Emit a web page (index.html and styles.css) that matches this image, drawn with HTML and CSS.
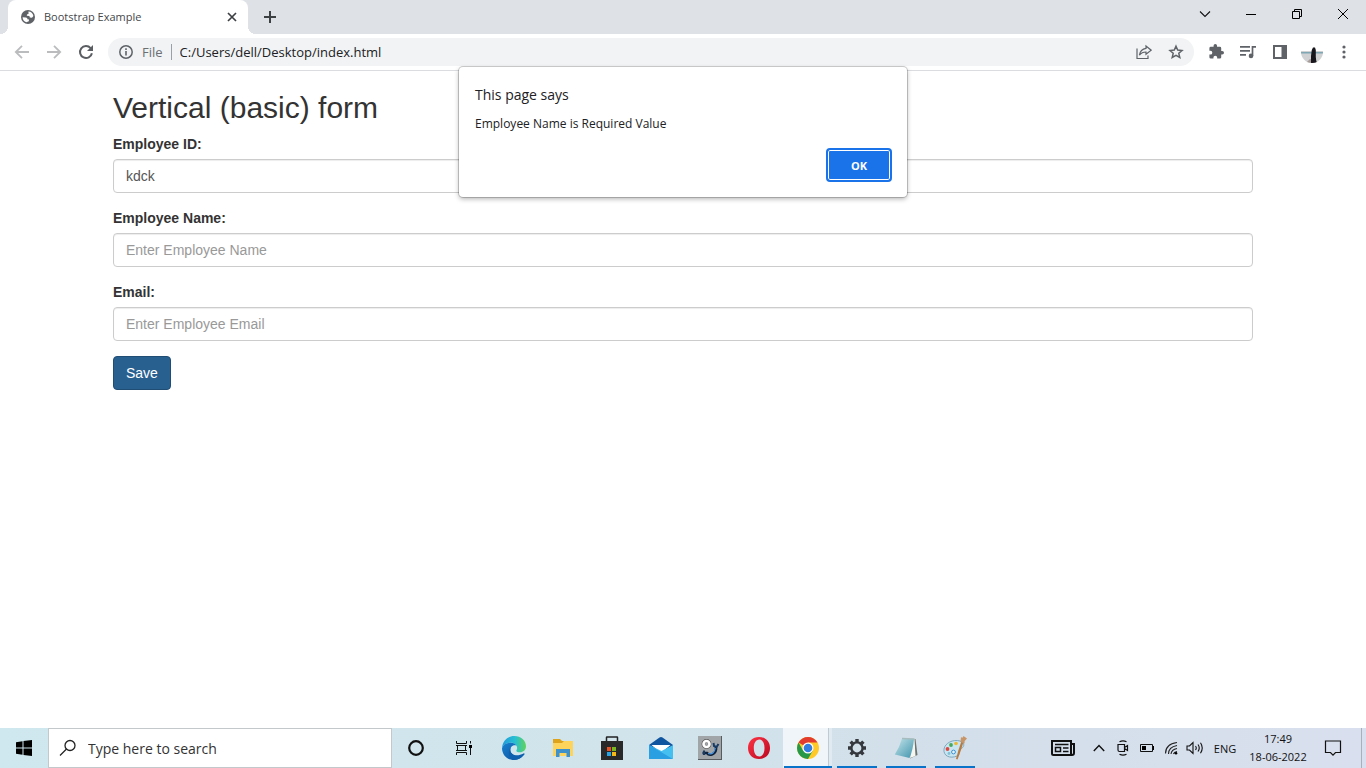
FILE: index.html
```html
<!DOCTYPE html>
<html lang="en">
<head>
<meta charset="utf-8">
<title>Bootstrap Example</title>
<link rel="stylesheet" href="styles.css">
</head>
<body>
<div class="desktop">
  <header class="tabstrip">
    <div class="tab">
      <svg class="icon" width="16" height="16" viewBox="0 0 16 16"><circle cx="8" cy="8" r="7" fill="#5f6368"/><path d="M2.6 8.2 5.8 8.4C7 8.6 7.6 9.2 7.4 10.2L9 10.4 8.8 12.2 6.4 13.3C4 12.6 2.7 10.6 2.6 8.2zM8.4 2.6C11 2.6 13 4.6 13.4 7L12 8.8 9.8 8.4 9.4 7 6.8 6.8 7 5.4 8.6 4.8z" fill="#fff"/></svg>
      <span class="tab-title">Bootstrap Example</span>
      <button class="tab-close" aria-label="Close tab"><svg width="10" height="10" viewBox="0 0 10 10"><path d="M1 1 9 9M9 1 1 9" stroke="#3c4043" stroke-width="1.7"/></svg></button>
    </div>
    <button class="new-tab" aria-label="New tab"><svg width="12" height="12" viewBox="0 0 12 12"><path d="M6 0V12M0 6H12" stroke="#3c4043" stroke-width="2"/></svg></button>
    <div class="window-buttons">
      <button class="window-button" aria-label="Search tabs"><svg width="12" height="12" viewBox="0 0 12 12"><path d="M1 3.500 6 8.500 11 3.500" fill="none" stroke="#111" stroke-width="1.100"/></svg></button>
      <button class="window-button" aria-label="Minimize"><svg width="10" height="10" viewBox="0 0 10 10"><path d="M0 5.500H10" stroke="#000"/></svg></button>
      <button class="window-button" aria-label="Restore"><svg width="10" height="10" viewBox="0 0 10 10"><path d="M.5 2.500H7.500V9.500H.5zM2.500 2.500V.5H9.500V7.500H7.500" fill="none" stroke="#000"/></svg></button>
      <button class="window-button" aria-label="Close"><svg width="10" height="10" viewBox="0 0 10 10"><path d="M0 0 10 10M10 0 0 10" stroke="#000"/></svg></button>
    </div>
  </header>

  <nav class="toolbar">
    <button class="tool" aria-label="Back"><svg width="16" height="16" viewBox="0 0 16 16"><path d="M15 8H2M8 1.800 1.800 8 8 14.200" fill="none" stroke="#babcbe" stroke-width="1.800"/></svg></button>
    <button class="tool" aria-label="Forward"><svg width="16" height="16" viewBox="0 0 16 16"><path d="M1 8H14M8 1.800 14.200 8 8 14.200" fill="none" stroke="#babcbe" stroke-width="1.800"/></svg></button>
    <button class="tool" aria-label="Reload"><svg width="16" height="16" viewBox="0 0 16 16"><path d="M13.900 9.200A6 6 0 1 1 12.600 4.100" fill="none" stroke="#5a5d61" stroke-width="2"/><path d="M15 1V7H9z" fill="#5a5d61"/></svg></button>
    <div class="omnibox">
      <svg class="icon" width="16" height="16" viewBox="0 0 16 16"><circle cx="8" cy="8" r="6.200" fill="none" stroke="#5f6368" stroke-width="1.500"/><path d="M8 7V11.500M8 4.300V6" stroke="#5f6368" stroke-width="1.600"/></svg>
      <label class="scheme" for="url">File</label>
      <input class="url" id="url" type="text" value="C:/Users/dell/Desktop/index.html">
      <button class="tool" aria-label="Share"><svg width="16" height="16" viewBox="0 0 16 16"><path d="M1 4.500V14.500H12V11.500M10 2 15.200 6.200 10 10.300V8C7 8 5 9 3.400 11.200 4 7.400 6.400 4.900 10 4.400z" fill="none" stroke="#5f6368" stroke-width="1.200"/></svg></button>
      <button class="tool" aria-label="Bookmark"><svg width="16" height="16" viewBox="0 0 16 16"><path d="M8 2.200 9.700 6.100 14 6.500 10.800 9.300 11.800 13.500 8 11.300 4.200 13.500 5.200 9.300 2 6.500 6.300 6.100z" fill="none" stroke="#5f6368" stroke-width="1.500"/></svg></button>
    </div>
    <button class="tool" aria-label="Extensions"><svg width="16" height="16" viewBox="1 1 23 23"><path d="M21.500 11H20V7a2 2 0 0 0-2-2h-4V3.500a2.500 2.500 0 0 0-5 0V5H5a2 2 0 0 0-2 2v3.800h1.500a2.700 2.700 0 0 1 0 5.400H3V20a2 2 0 0 0 2 2h3.800v-1.500a2.700 2.700 0 0 1 5.400 0V22H18a2 2 0 0 0 2-2v-4h1.500a2.500 2.500 0 0 0 0-5z" fill="#5f6368"/></svg></button>
    <button class="tool" aria-label="Media"><svg width="16" height="16" viewBox="0 0 16 16"><path d="M0 2.900H10M0 6.900H10M0 10.900H6M12.500 12V2.900H16" fill="none" stroke="#5f6368" stroke-width="1.700"/><circle cx="11" cy="11.900" r="2.300" fill="#5f6368"/></svg></button>
    <button class="tool" aria-label="Side panel"><svg width="16" height="16" viewBox="0 0 16 16"><path d="M1 1H15V15H1zM3 3V13H9.500V3z" fill="#5f6368" fill-rule="evenodd"/></svg></button>
    <button class="tool" aria-label="Profile"><svg width="22" height="22" viewBox="0 0 22 22"><clipPath id="face"><circle cx="11" cy="11" r="11"/></clipPath><g clip-path="url(#face)"><path d="M0 0H22V10H0z" fill="#fff"/><path d="M0 10H22V22H0z" fill="#cfd1d2"/><path d="M0 11H22V12.500H0z" fill="#7fa6b3"/><path d="M5 22 9 18 16 20V22z" fill="#a69c98"/><path d="M10.800 9 12 6.500 14 6.500 14.800 9 14.800 16 15.500 22H10V15z" fill="#17161c"/></g></svg></button>
    <button class="tool" aria-label="Menu"><svg width="16" height="16" viewBox="0 0 16 16" fill="#5f6368"><circle cx="8" cy="3" r="1.600"/><circle cx="8" cy="8" r="1.600"/><circle cx="8" cy="13" r="1.600"/></svg></button>
  </nav>

  <main class="page">
    <form class="container">
      <h2 class="heading">Vertical (basic) form</h2>
      <div class="form-group">
        <label for="empid">Employee ID:</label>
        <input class="form-control" id="empid" type="text" value="kdck">
      </div>
      <div class="form-group">
        <label for="empname">Employee Name:</label>
        <input class="form-control" id="empname" type="text" placeholder="Enter Employee Name">
      </div>
      <div class="form-group">
        <label for="email">Email:</label>
        <input class="form-control" id="email" type="email" placeholder="Enter Employee Email">
      </div>
      <button class="save" type="button">Save</button>
    </form>
  </main>

  <section class="alert" role="alertdialog" aria-labelledby="alert-title" aria-describedby="alert-text">
    <h1 class="alert-title" id="alert-title">This page says</h1>
    <p class="alert-text" id="alert-text">Employee Name is Required Value</p>
    <button class="alert-ok">OK</button>
  </section>

  <footer class="taskbar">
    <button class="start" aria-label="Start"><svg width="16" height="16" viewBox="0 0 16 16"><path d="M0 2.200 6.500 1.300V7.500H0zM7.500 1.100 16 0V7.500H7.500zM0 8.500H6.500V14.700L0 13.800zM7.500 8.500H16V16L7.500 14.900z"/></svg></button>
    <div class="search">
      <svg class="icon" width="18" height="18" viewBox="0 0 18 18"><circle cx="11" cy="6.500" r="5" fill="none" stroke="#222" stroke-width="1.300"/><path d="M7.500 10 1 16.500" stroke="#222" stroke-width="1.300"/></svg>
      <input class="search-input" type="text" aria-label="Search" placeholder="Type here to search">
    </div>
    <button class="app shell" aria-label="Cortana"><svg width="18" height="18" viewBox="0 0 18 18"><circle cx="9" cy="9" r="6.800" fill="none" stroke="#111" stroke-width="2.200"/></svg></button>
    <button class="app shell" aria-label="Task view"><svg width="18" height="16" viewBox="0 0 18 16"><path d="M1.500 1V3.500H11.500V1M1.500 15V12.500H11.500V15M2.500 5.500H10.500V10.500H2.500zM1 5.500H12M1 10.500H12M15.500 1V3.500M15.500 8V15" fill="none" stroke="#111"/><path d="M14 5H17V8H14z"/></svg></button>
    <button class="app" aria-label="Edge"><svg width="24" height="24" viewBox="0 0 24 24"><defs><linearGradient id="edge-top" x2="1"><stop stop-color="#219bdc"/><stop offset=".55" stop-color="#28bfd2"/><stop offset="1" stop-color="#5fd45a"/></linearGradient><linearGradient id="edge-low" x2="1" y2="1"><stop stop-color="#1681cf"/><stop offset="1" stop-color="#0d4f9e"/></linearGradient></defs><path d="M0 12C.8 4.500 6 0 12.300 0 19 0 24 4.800 24 10.300 24 14 21.300 16.300 18 16.300 15.500 16.300 13.800 15.300 14.600 14 16.300 11 13.800 6.700 8.800 6.700 4.500 6.700 1.300 9 0 12z" fill="url(#edge-top)"/><path d="M0 12C1.200 8.800 4.500 6.700 8.800 6.700 11.500 6.700 13.500 8 14.500 9.500 11 8.500 8.200 11 8.300 14 8.500 18.500 13.500 21.500 20.500 19.500 18.500 22.500 15 24 12 24 5 24 0 18.800 0 12z" fill="url(#edge-low)"/><path d="M8.300 14C8.500 19 15 21 21.500 17.500 22.500 17 23 18 22 19 19 23 14.500 24 12 23.700 6 22.500 5.500 14.500 9.300 10.800 8.600 11.500 8.300 12.700 8.300 14z" fill="#0e5fae"/></svg></button>
    <button class="app" aria-label="File Explorer"><svg width="22" height="20" viewBox="0 0 22 20"><path d="M1 1H8L10 3H21V6H1z" fill="#dfa21b"/><path d="M1 5H10L12 3H21V18H1z" fill="#ffd45c"/><path d="M4 19V11H18V19H14.500V15H7.500V19z" fill="#3f91cb"/></svg></button>
    <button class="app" aria-label="Store"><svg width="24" height="24" viewBox="0 0 24 24"><path d="M6.500 6V1.500Q6.500 1 7 1H17Q17.500 1 17.500 1.500V6" fill="none" stroke="#222" stroke-width="1.500"/><path d="M1 5H23V24H1z" fill="#292929"/><path d="M7 11H11V15H7z" fill="#e95224"/><path d="M12 11H16V15H12z" fill="#78b720"/><path d="M7 16H11V20H7z" fill="#24a6e8"/><path d="M12 16H16V20H12z" fill="#f5b817"/></svg></button>
    <button class="app" aria-label="Mail"><svg width="24" height="24" viewBox="0 0 24 24"><path d="M0 9 10.500 1.500Q12 .6 13.500 1.500L24 9V15H0z" fill="#0f559f"/><path d="M2.500 9H21.500L12 17z" fill="#fff"/><path d="M0 9 12.500 15 24 9V23H0z" fill="#45bff0"/><path d="M0 9 23 22.500V23H0z" fill="#2a9fe2"/></svg></button>
    <button class="app" aria-label="Diagnostics"><svg width="24" height="24" viewBox="0 0 24 24"><path d="M0 0H24V24H0z" fill="#585c60"/><path d="M0 0H23V23H0z" fill="#a2a5a7"/><circle cx="8.500" cy="8" r="3.200" fill="none" stroke="#555" stroke-width="3.400"/><circle cx="8.500" cy="8" r="3" fill="none" stroke="#fff" stroke-width="2.600"/><path d="M4.500 17H9C11 20 17 19 18 13.500L18 11" fill="none" stroke="#10243d" stroke-width="2.600"/><path d="M10 17.500C14 18.500 16.500 17 17.300 12" fill="none" stroke="#4e9be5" stroke-width="1.200"/><path d="M6 14.500V19M15.500 7 16 10 18.500 11 20.500 8" fill="none" stroke="#153b66" stroke-width="2"/></svg></button>
    <button class="app" aria-label="Opera"><svg width="24" height="24" viewBox="0 0 24 24"><defs><linearGradient id="opera" y2="1"><stop stop-color="#ff3445"/><stop offset="1" stop-color="#b90820"/></linearGradient></defs><path d="M12 1C18.500 1 23 5.500 23 12S18.500 23 12 23 1 18.500 1 12 5.500 1 12 1zM12.300 3.500C9 3.500 6.800 7 6.800 12S9 20.500 12.300 20.500 17.500 17 17.500 12 15.500 3.500 12.300 3.500z" fill="url(#opera)" fill-rule="evenodd"/></svg></button>
    <button class="app open active" aria-label="Chrome"><svg width="24" height="24" viewBox="0 0 24 24"><circle cx="12" cy="12" r="11" fill="#ffca28"/><path d="M12 12 2.500 6.500A11 11 0 0 1 21.500 6.500H12z" fill="#e33b2e"/><path d="M2.500 6.500A11 11 0 0 0 12 23L16.800 14.800 7.200 14.700z" fill="#279847"/><circle cx="12" cy="12" r="5.500" fill="#fff"/><circle cx="12" cy="12" r="4.300" fill="#347de0"/></svg></button>
    <button class="app open" aria-label="Settings"><svg width="20" height="20" viewBox="0 0 20 20"><circle cx="10" cy="10" r="5.600" fill="none" stroke="#35383d" stroke-width="2.400"/><path d="M10 1V4.500M10 15.500V19M1 10H4.500M15.500 10H19M3.600 3.600 6 6M14 14 16.400 16.400M16.400 3.600 14 6M6 14 3.600 16.400" stroke="#35383d" stroke-width="3.400"/></svg></button>
    <button class="app open" aria-label="Notepad"><svg width="24" height="24" viewBox="0 0 24 24"><defs><linearGradient id="note" x2="1" y2="1"><stop stop-color="#c5e6ea"/><stop offset="1" stop-color="#3f93ad"/></linearGradient></defs><path d="M19 3 21.500 3 23.500 19 16 22.500z" fill="#6c7472"/><path d="M19 3 20.500 3 21.500 20 16 22z" fill="#f5f6ef"/><path d="M8 2.500 20 3Q19 14 15.500 22L.8 18.500Q5.500 11.500 8 2.500z" fill="url(#note)"/><path d="M8 2.500 20.500 3" stroke="#a6bcbe" stroke-width="1.500"/></svg></button>
    <button class="app open" aria-label="Paint"><svg width="24" height="24" viewBox="0 0 24 24"><path d="M1 13C2 7 10 3 17 5 23 7 21 12 17 13 15 15 18 18 14 20 7 23 0 20 1 13z" fill="#c8e5f1" stroke="#7fa9bf"/><circle cx="4.500" cy="13" r="1.900" fill="#dc4840"/><circle cx="8" cy="9" r="1.900" fill="#48a95b"/><circle cx="13" cy="7.500" r="1.800" fill="#eeb732"/><circle cx="6" cy="17.500" r="1.400" fill="#7fc2d5"/><circle cx="10.500" cy="16" r="1.900" fill="#e5f2f7" stroke="#3b8fd2"/><path d="M20.500 6 18 14 14.500 23.500 13 23 15.500 14 18.500 5z" fill="#b97a40"/><path d="M17.500 6 18 1Q19.500 3 20.500 0L24 2.500Q21.500 4 21.500 7.500z" fill="#c79567"/></svg></button>
    <div class="tray">
      <button class="tray-news" aria-label="News"><svg width="24" height="16" viewBox="0 0 24 16"><path d="M1 1H20V15H2.500Q1 15 1 13.500zM20 4H23V13Q23 15 21 15H19" fill="none" stroke="#111" stroke-width="2"/><path d="M4 4.500H17.500M12 8H17.500M12 11.500H17.500M4.500 7.500H9.500V11.500H4.500z" fill="none" stroke="#111" stroke-width="1.500"/></svg></button>
      <button class="tray-icon" aria-label="Show hidden icons"><svg width="12" height="8" viewBox="0 0 12 8"><path d="M.8 7 6 1.500 11.200 7" fill="none" stroke="#111" stroke-width="1.400"/></svg></button>
      <button class="tray-icon" aria-label="Meet now"><svg width="14" height="16" viewBox="0 0 14 16"><path d="M2 4.500H8.500V11.500H3.500Q2 11.500 2 10zM8.500 7.500 11.500 5.500V10.500L8.500 8.500M3.500 1.800Q7 0 10.500 1.800M3.500 14.200Q7 16 10.500 14.200" fill="none" stroke="#111" stroke-width="1.200"/></svg></button>
      <button class="tray-icon" aria-label="Battery"><svg width="16" height="10" viewBox="0 0 16 10"><path d="M1.500 1.500H13.500V8.500H1.500z" fill="none" stroke="#111"/><path d="M3 3H7V7H3zM14 3H15V7H14z"/></svg></button>
      <button class="tray-icon" aria-label="Network"><svg width="14" height="14" viewBox="0 0 14 14"><path d="M1.500 12.500Q1.500 3 13 1.500M4.500 13Q4.500 6 13 4.500M7 13Q7.500 8.500 13 7.500M9.500 13Q10 11 13 10.500" fill="none" stroke="#222" stroke-width="1.100"/><circle cx="12" cy="12.300" r="1.300"/></svg></button>
      <button class="tray-icon" aria-label="Volume"><svg width="18" height="14" viewBox="0 0 18 14"><path d="M1 5H3.500L7 1.500V12.500L3.500 9H1zM9.500 5Q11 7 9.500 9M12 3.500Q14.500 7 12 10.500M14.500 1.800Q18 7 14.500 12.200" fill="none" stroke="#111" stroke-width="1.100"/></svg></button>
      <button class="language">ENG</button>
      <button class="clock"><span>17:49</span><span>18-06-2022</span></button>
      <button class="notifications" aria-label="Notifications"><svg width="18" height="18" viewBox="0 0 18 18"><path d="M1.500 2H16.500V13.500H11.500L9 16.200 6.500 13.500H1.500z" fill="none" stroke="#111" stroke-width="1.200"/></svg></button>
      <button class="show-desktop" aria-label="Show desktop"></button>
    </div>
  </footer>
</div>
</body>
</html>
```

FILE: styles.css
```css
* { box-sizing: border-box; }
body { margin: 0; font-family: "Open Sans", "Noto Sans", sans-serif; color: #202124; background: #fff; }
button { display: flex; align-items: center; justify-content: center; flex: none; padding: 0; border: 0; background: transparent; color: inherit; font-family: inherit; }
input { min-width: 0; font-family: inherit; }
svg { display: block; flex: none; }
.desktop { position: relative; display: flex; flex-direction: column; min-height: 100vh; }

.tabstrip { display: flex; height: 34px; padding-left: 8px; background: #dee1e6; }
.tab { position: relative; display: flex; align-items: center; gap: 8px; width: 240px; padding: 0 8px 0 12px; border-radius: 8px 8px 0 0; background: #fff; }
.tab::before, .tab::after { content: ""; position: absolute; bottom: 0; width: 8px; height: 8px; }
.tab::before { left: -8px; background: radial-gradient(circle at 0 0, #dee1e6 8px, #fff 8px); }
.tab::after { right: -8px; background: radial-gradient(circle at 100% 0, #dee1e6 8px, #fff 8px); }
.tab-title { flex: 1; font-size: 11px; line-height: 16px; color: #45474a; }
.tab-close { width: 16px; height: 16px; }
.new-tab { width: 28px; margin-left: 8px; }
.window-buttons { display: flex; height: 28px; margin-left: auto; }
.window-button { width: 46px; }

.toolbar { display: flex; align-items: center; height: 37px; padding: 0 6px; border-bottom: 1px solid #dadce0; }
.tool { width: 32px; height: 28px; }
.omnibox { display: flex; flex: 1; align-items: center; height: 28px; margin: 0 6px; padding: 0 2px 0 10px; border-radius: 14px; background: #f1f3f4; }
.scheme { margin-left: 8px; padding-right: 8px; border-right: 1px solid #9aa0a6; font-size: 13px; line-height: 16px; color: #6b6f73; }
.url { flex: 1; padding: 0 0 0 8px; border: 0; background: transparent; font-size: 13px; color: #202124; }

.page { flex: 1; font-family: "Liberation Sans", Arial, sans-serif; font-size: 14px; line-height: 20px; color: #333; }
.container { max-width: 1170px; margin: 0 auto; padding: 20px 15px; }
.heading { margin: 0 0 10px; font-size: 30px; font-weight: 400; line-height: 33px; }
.form-group { margin-bottom: 15px; }
.form-group label { display: block; margin-bottom: 5px; font-weight: 700; }
.form-control { display: block; width: 100%; height: 34px; padding: 6px 12px; border: 1px solid #ccc; border-radius: 4px; background: #fff; box-shadow: inset 0 1px 1px rgba(0, 0, 0, .075); font-size: 14px; color: #555; }
.form-control::placeholder { color: #999; }
.save { height: 34px; padding: 0 12px; border: 1px solid #204d74; border-radius: 4px; background: #286090; color: #fff; font-size: 14px; }

.alert { position: absolute; top: 67px; left: 50%; display: flex; flex-direction: column; width: 448px; padding: 18px 15px 15px 16px; border-radius: 4px; background: #fff; box-shadow: 0 0 0 1px rgba(0, 0, 0, .18), 0 2px 5px rgba(0, 0, 0, .3); transform: translateX(-50%); }
.alert-title { margin: 0; font-size: 14px; font-weight: 400; line-height: 20px; }
.alert-text { margin: 10px 0 16px; font-size: 12px; line-height: 17px; }
.alert-ok { align-self: flex-end; width: 66px; height: 34px; border: 2px solid #1a73e8; border-radius: 4px; background: #1a73e8; box-shadow: inset 0 0 0 1px #fff; color: #fff; font-size: 11px; font-weight: 700; }

.taskbar { display: flex; height: 40px; background: linear-gradient(90deg, #cfe7ee, #d1e4ec 45%, #d3dfea 70%, #d9dfee); color: #111; }
.start { width: 48px; }
.search { display: flex; flex: 0 1 344px; align-items: center; gap: 11px; padding: 0 10px; border: 1px solid #c3c8ca; background: #fff; }
.search-input { flex: 1; padding: 0; border: 0; font-size: 14px; }
.search-input::placeholder { color: #333; }
.app { position: relative; width: 49px; }
.app.shell { width: 48px; }
.app.shell + .app:not(.shell) { margin-left: 1px; }
.app.open::after { content: ""; position: absolute; right: 4px; bottom: 0; left: 5px; height: 2px; background: #0873c9; }
.app.active { background: linear-gradient(90deg, #eff5f8 45px, #bfcad1 45px 46px, #e0eaf0 46px); }
.app.active::after { right: 0; left: 1px; }
.tray { display: flex; margin-left: auto; }
.tray-news { width: 48px; }
.tray-icon { width: 24px; }
.language { width: 36px; font-size: 11px; }
.clock { flex-direction: column; width: 70px; font-size: 11px; line-height: 18px; }
.notifications { width: 40px; }
.show-desktop { width: 5px; margin-left: 8px; border-left: 1px solid #a8b0bc; }
```
